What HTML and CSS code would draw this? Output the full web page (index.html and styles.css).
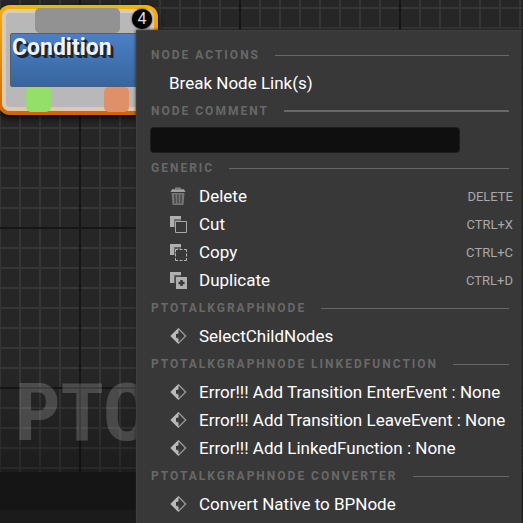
FILE: index.html
```html
<!DOCTYPE html>
<html lang="en">
<head>
<meta charset="utf-8">
<title>Graph editor</title>
<link rel="stylesheet" href="styles.css">
</head>
<body>
<svg class="defs" aria-hidden="true">
  <symbol id="i-delete" viewBox="0 0 18 18">
    <path fill="#8c8c8c" d="M6 1.500q0-1 1-1h4q1 0 1 1v.8h-1.300v-.6H7.300v.6H6z"/>
    <path fill="#a0a0a0" d="M3 2.200h12l1.500 2.800h-15z"/>
    <path fill="#747474" d="M2.500 6h13l-1 12h-11z"/>
    <path fill="none" stroke="#434343" stroke-width="1.300" d="M5.800 7.500l.4 9M9 7.500v9M12.200 7.500l-.4 9"/>
  </symbol>
  <symbol id="i-cut" viewBox="0 0 18 18">
    <path fill="#b0b0b0" d="M1 1h11v4H6v7H1z"/>
    <path fill="#6c6c6c" d="M5 4h7v2H7v6H5z"/>
    <path fill="none" stroke="#a8a8a8" d="M6.500 6.500h11v11h-11z"/>
  </symbol>
  <symbol id="i-copy" viewBox="0 0 18 18">
    <path fill="#b0b0b0" d="M1 1h11v4H6v7H1z"/>
    <path fill="#606060" d="M5 4h7v2H7v6H5z"/>
    <path fill="none" stroke="#b4b4b4" d="M6.500 9V6.500H9M15 6.500h2.500V9M17.500 15v2.500H15M9 17.500H6.500V15M10.500 6.500h3M10.500 17.500h3M6.500 10.500v3M17.500 10.500v3"/>
  </symbol>
  <symbol id="i-duplicate" viewBox="0 0 18 18">
    <path fill="#b0b0b0" d="M1 1h11v4H6v7H1zM7 6h11v12H7z"/>
    <path fill="#606060" d="M5 4h7v1.500H6.500V12H5z"/>
    <path fill="none" stroke="#383838" stroke-width="2.400" d="M12.500 9v6M9.500 12h6"/>
  </symbol>
  <symbol id="i-event" viewBox="0 0 18 18">
    <path fill="none" stroke="#999" stroke-width="1.300" d="M9.500 1.800L16.700 9l-7.200 7.200L2.300 9z"/>
    <path fill="#bababa" d="M9.500 1v5.500L7 7v1h5v2.200H7V11l2.500.6V17l-8-8z"/>
    <path fill="#383838" d="M7 7.800h3V5.500L13.300 9 10 12.500v-2.300H7z"/>
  </symbol>
</svg>

<main class="graph">
  <div class="watermark">PTO</div>
  <section class="node">
    <div class="pin pin-top"></div>
    <h1 class="node-title">Condition</h1>
    <div class="pin pin-green"></div>
    <div class="pin pin-coral"></div>
    <span class="badge">4</span>
  </section>
</main>
<footer class="status"></footer>

<div class="menu">
  <h2 class="heading">NODE ACTIONS</h2>
  <button class="item">Break Node Link(s)</button>

  <h2 class="heading heading-strong"><label for="comment">NODE COMMENT</label></h2>
  <div class="comment"><input id="comment" type="text"></div>

  <h2 class="heading">GENERIC</h2>
  <button class="item"><svg class="icon"><use href="#i-delete"/></svg>Delete<kbd>DELETE</kbd></button>
  <button class="item"><svg class="icon"><use href="#i-cut"/></svg>Cut<kbd>CTRL+X</kbd></button>
  <button class="item"><svg class="icon"><use href="#i-copy"/></svg>Copy<kbd>CTRL+C</kbd></button>
  <button class="item"><svg class="icon"><use href="#i-duplicate"/></svg>Duplicate<kbd>CTRL+D</kbd></button>

  <h2 class="heading">PTOTALKGRAPHNODE</h2>
  <button class="item"><svg class="icon"><use href="#i-event"/></svg>SelectChildNodes</button>

  <h2 class="heading">PTOTALKGRAPHNODE LINKEDFUNCTION</h2>
  <button class="item"><svg class="icon"><use href="#i-event"/></svg>Error!!! Add Transition EnterEvent : None</button>
  <button class="item"><svg class="icon"><use href="#i-event"/></svg>Error!!! Add Transition LeaveEvent : None</button>
  <button class="item"><svg class="icon"><use href="#i-event"/></svg>Error!!! Add LinkedFunction : None</button>

  <h2 class="heading">PTOTALKGRAPHNODE CONVERTER</h2>
  <button class="item"><svg class="icon"><use href="#i-event"/></svg>Convert Native to BPNode</button>
</div>
</body>
</html>
```
FILE: styles.css
```css
* {
  box-sizing: border-box;
}

body {
  margin: 0;
  height: 100vh;
  display: flex;
  flex-direction: column;
  position: relative;
  overflow: hidden;
  background: #151515;
  font-family: Roboto, "Liberation Sans", sans-serif;
}

.defs {
  position: absolute;
  width: 0;
  height: 0;
}

/* Graph canvas: a fine 20px grid with a dark line every eighth cell */
.graph {
  flex: 1;
  position: relative;
  overflow: hidden;
  background-color: #262626;
  background-image:
    linear-gradient(to top, rgba(0, 0, 0, 0.25), transparent 100px),
    linear-gradient(to right, #161616 2px, transparent 2px),
    linear-gradient(#161616 2px, transparent 2px),
    linear-gradient(to right, #353535 2px, transparent 2px),
    linear-gradient(#353535 2px, transparent 2px);
  background-size: auto, 160px 160px, 160px 160px, 20px 20px, 20px 20px;
  background-position: 0 0, 79px 0, 0 67px, 19px 0, 0 7px;
}

.status {
  height: 51px;
  background: #151515;
  border-bottom: 13px solid #1b1b1b;
}

.watermark {
  position: absolute;
  left: 15px;
  bottom: 15px;
  font: bold 80px/88px "Roboto Condensed", "Liberation Sans Narrow", Roboto, sans-serif;
  color: rgba(255, 255, 255, 0.18);
}

.node {
  position: absolute;
  left: -2px;
  top: 5px;
  width: 160px;
  height: 110px;
  border: 4px solid transparent;
  border-radius: 12px;
  background:
    linear-gradient(#b8b8b8, #b8b8b8) padding-box,
    linear-gradient(#f5b30a, #cf6500) border-box;
  box-shadow: 0 3px 6px rgba(0, 0, 0, 0.8);
}

.node::before {
  content: "";
  position: absolute;
  inset: 0;
  border: 4px solid #dccbb2;
  border-radius: 8px;
}

.node-title {
  position: absolute;
  left: 8px;
  right: 8px;
  top: 24px;
  height: 54px;
  margin: 0;
  padding: 1px;
  border: 1px solid #555e6c;
  border-radius: 2px;
  background: linear-gradient(#4b80c6, #38659d);
  color: #f2f2f2;
  font-size: 23px;
  line-height: 26px;
  text-shadow: 1px 1px #17263b, 2px 2px #17263b, 3px 3px #17263b;
}

.pin {
  position: absolute;
  top: 78px;
  width: 25px;
  height: 25px;
  border-radius: 5px;
}

.pin-top {
  top: -1px;
  left: 33px;
  width: 85px;
  background: #929292;
}

.pin-green {
  left: 24px;
  background: #94df6a;
}

.pin-coral {
  left: 102px;
  background: #e09068;
}

.badge {
  position: absolute;
  top: 0;
  right: 2px;
  width: 20px;
  height: 20px;
  border-radius: 50%;
  background: #000;
  box-shadow: 0 0 2px #000;
  color: #ddd;
  font-size: 16px;
  line-height: 20px;
  text-align: center;
}

/* Context menu */
.menu {
  position: absolute;
  left: 136px;
  right: 1px;
  top: 30px;
  bottom: 0;
  padding-top: 10px;
  display: flex;
  flex-direction: column;
  border: 1px solid #303030;
  border-top-color: #404040;
  border-left-color: #404040;
  border-bottom: 0;
  background: #383838;
  box-shadow: 0 0 3px #222;
}

.heading {
  flex: none;
  display: flex;
  align-items: center;
  gap: 15px;
  height: 28px;
  margin: 0;
  padding: 0 12px 0 14px;
  color: #686868;
  font-size: 12px;
  font-weight: bold;
  letter-spacing: 2px;
  white-space: nowrap;
}

.heading::after {
  content: "";
  flex: 1;
  height: 1px;
  background: #686868;
}

.heading-strong::after {
  height: 2px;
}

.comment {
  flex: none;
  display: flex;
  align-items: center;
  height: 29px;
  padding: 0 61px 0 13px;
}

.comment input {
  flex: 1;
  min-width: 0;
  height: 26px;
  padding: 0 8px;
  border: 1px solid #1c1c1c;
  border-radius: 4px;
  background: #0f0f0f;
  color: #fff;
  font: 16px Roboto, sans-serif;
}

.item {
  flex: none;
  display: flex;
  align-items: center;
  height: 28px;
  padding: 0 8px 0 32px;
  border: 0;
  background: none;
  color: #fff;
  font: 17px Roboto, "Liberation Sans", sans-serif;
  text-align: left;
  white-space: nowrap;
}

.icon {
  flex: none;
  width: 18px;
  height: 18px;
  margin-right: 12px;
}

kbd {
  margin-left: auto;
  color: #a8a8a8;
  font: 13px Roboto, "Liberation Sans", sans-serif;
}
```
